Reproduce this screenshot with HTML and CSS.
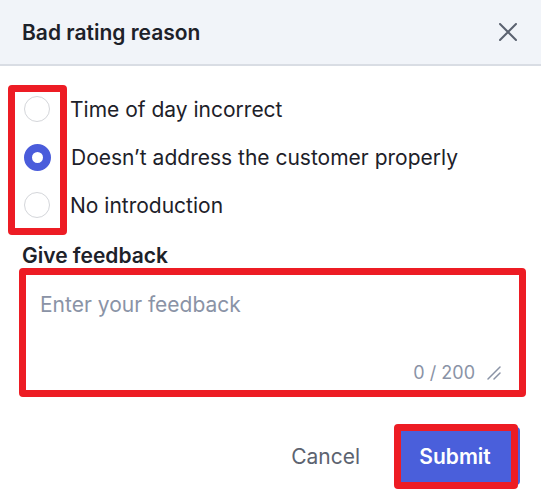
FILE: index.html
```html
<!DOCTYPE html>
<html>
<head>
<meta charset="utf-8">
<link rel="stylesheet" href="styles.css">
</head>
<body>
<div class="dialog">
  <div class="header">
    <div class="title">Bad rating reason</div>
    <svg class="close" width="18" height="18" viewBox="0 0 18 18"><path d="M1 1L17 17M17 1L1 17" stroke="#5b6270" stroke-width="2" stroke-linecap="round"/></svg>
  </div>
  <div class="body">
    <div class="options">
      <label class="option"><span class="radio"></span><span>Time of day incorrect</span></label>
      <label class="option"><span class="radio checked"></span><span>Doesn’t address the customer properly</span></label>
      <label class="option"><span class="radio"></span><span>No introduction</span></label>
    </div>
    <div class="label">Give feedback</div>
    <div class="textbox">
      <div class="placeholder">Enter your feedback</div>
      <div class="counter-row">
        <span class="counter">0 / 200</span>
        <svg class="resize" width="14" height="14" viewBox="0 0 14 14"><path d="M1 13L13 1M7 13L13 7" stroke="#8a93a6" stroke-width="1.5" stroke-linecap="round"/></svg>
      </div>
    </div>
  </div>
  <div class="footer">
    <button class="btn cancel">Cancel</button>
    <button class="btn submit">Submit</button>
  </div>
</div>
<div class="mark mark-radios"></div>
<div class="mark mark-text"></div>
<div class="mark mark-submit"></div>
</body>
</html>
```
FILE: styles.css
```css
html, body {
  margin: 0;
  padding: 0;
  background: #ffffff;
}
body {
  font-family: Inter, "Noto Sans", sans-serif;
  color: #1d2129;
  width: 541px;
  height: 503px;
  overflow: hidden;
  position: relative;
}
.header {
  height: 64px;
  background: #f1f4f9;
  border-bottom: 2px solid #d9dde4;
  display: flex;
  align-items: center;
  justify-content: space-between;
  padding: 0 24px 0 22px;
}
.title {
  font-size: 21px;
  font-weight: 600;
}
.close {
  display: block;
}
.body {
  padding: 19px 19px 0 22px;
}
.options {
  display: flex;
  flex-direction: column;
}
.option {
  height: 48px;
  display: flex;
  align-items: center;
  gap: 20px;
  font-size: 21px;
  padding-left: 2px;
}
.radio {
  width: 24px;
  height: 24px;
  border: 1.5px solid #d4d6da;
  border-radius: 50%;
  background: #fff;
  flex: none;
}
.radio.checked {
  width: 11px;
  height: 11px;
  border: 8px solid #4a5cdb;
}
.label {
  font-size: 21px;
  font-weight: 600;
  margin-top: 13px;
  line-height: 28px;
}
.textbox {
  margin-top: 3px;
  height: 119px;
  border: 1px solid #d3d7de;
  border-radius: 6px;
  display: flex;
  flex-direction: column;
  justify-content: space-between;
  padding: 17px 20px 8px 17px;
  box-sizing: border-box;
}
.placeholder {
  font-size: 21px;
  color: #8a93a6;
  line-height: 28px;
}
.counter-row {
  display: flex;
  justify-content: flex-end;
  align-items: center;
  gap: 12px;
}
.counter {
  font-size: 18px;
  color: #8a93a6;
}
.footer {
  display: flex;
  justify-content: flex-end;
  align-items: center;
  gap: 40px;
  padding: 35px 21px 0 0;
}
.btn {
  font-family: Inter, "Noto Sans", sans-serif;
  font-size: 21px;
  border: none;
  background: none;
  padding: 0;
  cursor: pointer;
}
.cancel {
  color: #5c6370;
}
.submit {
  width: 120px;
  height: 58px;
  background: #4a5fdb;
  color: #fff;
  font-weight: 600;
  border-radius: 4px;
  padding-right: 10px;
}
.mark {
  position: absolute;
  border: 7px solid #ed1c24;
  border-radius: 4px;
  box-sizing: border-box;
}
.mark-radios {
  left: 8px;
  top: 85px;
  width: 59px;
  height: 150px;
}
.mark-text {
  left: 19px;
  top: 268px;
  width: 507px;
  height: 129px;
}
.mark-submit {
  left: 394px;
  top: 424px;
  width: 124px;
  height: 65px;
}
```
